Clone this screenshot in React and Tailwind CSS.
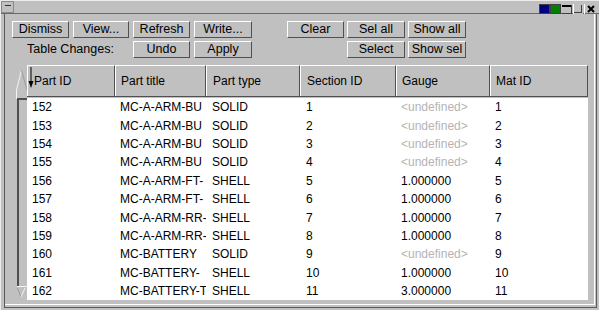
import React from "react";

const font = { fontFamily: '"Liberation Sans", Arial, sans-serif' };

const columns = [
  { key: "id", label: "Part ID", width: "w-[88px]", pad: "pl-[5px]" },
  { key: "title", label: "Part title", width: "w-[91px]", pad: "pl-[5px]" },
  { key: "type", label: "Part type", width: "w-[94px]", pad: "pl-[6px]" },
  { key: "section", label: "Section ID", width: "w-[96px]", pad: "pl-[6px]" },
  { key: "gauge", label: "Gauge", width: "w-[94px]", pad: "pl-[5px]" },
  { key: "mat", label: "Mat ID", width: "w-[98px]", pad: "pl-[5px]" },
];

const parts = [
  { id: 152, title: "MC-A-ARM-BU", type: "SOLID", section: 1, gauge: null, mat: 1 },
  { id: 153, title: "MC-A-ARM-BU", type: "SOLID", section: 2, gauge: null, mat: 2 },
  { id: 154, title: "MC-A-ARM-BU", type: "SOLID", section: 3, gauge: null, mat: 3 },
  { id: 155, title: "MC-A-ARM-BU", type: "SOLID", section: 4, gauge: null, mat: 4 },
  { id: 156, title: "MC-A-ARM-FT-", type: "SHELL", section: 5, gauge: "1.000000", mat: 5 },
  { id: 157, title: "MC-A-ARM-FT-", type: "SHELL", section: 6, gauge: "1.000000", mat: 6 },
  { id: 158, title: "MC-A-ARM-RR-", type: "SHELL", section: 7, gauge: "1.000000", mat: 7 },
  { id: 159, title: "MC-A-ARM-RR-", type: "SHELL", section: 8, gauge: "1.000000", mat: 8 },
  { id: 160, title: "MC-BATTERY", type: "SOLID", section: 9, gauge: null, mat: 9 },
  { id: 161, title: "MC-BATTERY-", type: "SHELL", section: 10, gauge: "1.000000", mat: 10 },
  { id: 162, title: "MC-BATTERY-T", type: "SHELL", section: 11, gauge: "3.000000", mat: 11 },
];

const Button = ({ children, className = "" }) => (
  <button
    className={`h-[17px] flex items-center justify-center bg-[#c0c0c0] border-t border-l border-white border-b border-r border-b-[#505050] border-r-[#505050] text-[12.5px] leading-none text-black ${className}`}
  >
    {children}
  </button>
);

const TitleBar = () => (
  <div className="h-[13px] flex items-start border-b border-[#6a6a6a] shrink-0">
    <div className="w-[13px] h-[12px] border border-[#8a8a8a] relative">
      <div className="absolute left-[3px] top-[3px] w-[6px] h-px bg-[#303030]" />
    </div>
    <div className="flex-1" />
    <div className="flex items-start mt-[3px]">
      <div className="w-[11px] h-[10px] bg-[#000080] border border-[#404040]" />
      <div className="w-[11px] h-[10px] bg-[#008000] border border-[#404040]" />
      <svg width="11" height="10" className="ml-px">
        <rect x="0" y="0" width="10" height="10" fill="#c0c0c0" />
        <rect x="0" y="1" width="9" height="2" fill="#000" />
        <line x1="9.5" y1="1" x2="9.5" y2="10" stroke="#404040" />
        <line x1="0" y1="9.5" x2="10" y2="9.5" stroke="#404040" />
      </svg>
      <svg width="10" height="10">
        <rect x="0" y="0" width="10" height="10" fill="#c0c0c0" />
        <line x1="0.5" y1="0" x2="0.5" y2="10" stroke="#ffffff" />
        <line x1="8.5" y1="1" x2="8.5" y2="9" stroke="#404040" />
        <line x1="1" y1="8.5" x2="9" y2="8.5" stroke="#404040" />
      </svg>
      <div className="w-px h-[10px] bg-white ml-[1px]" />
      <svg width="11" height="10" className="ml-[1px] mr-[2px]">
        <path d="M2 2 L8 8 M8 2 L2 8" stroke="#000" strokeWidth="2" />
      </svg>
    </div>
  </div>
);

const Scrollbar = () => (
  <svg width="11" height="235" className="shrink-0">
    <line x1="0.5" y1="25" x2="5.5" y2="5" stroke="#f4f4f4" />
    <line x1="5.5" y1="5" x2="11" y2="25" stroke="#9a9a9a" />
    <line x1="0.5" y1="25" x2="0.5" y2="34" stroke="#f4f4f4" />
    <rect x="1" y="33" width="10" height="2" fill="#505050" />
    <rect x="1" y="33" width="2" height="188" fill="#505050" />
    <line x1="1" y1="221.5" x2="11" y2="221.5" stroke="#f4f4f4" />
    <line x1="1.5" y1="223" x2="5" y2="232" stroke="#9a9a9a" />
    <line x1="5" y1="232" x2="9" y2="223" stroke="#f4f4f4" />
  </svg>
);

const SortArrow = () => (
  <svg width="6" height="22" className="shrink-0 self-start mt-[1px] ml-[0px]">
    <line x1="3" y1="0" x2="3" y2="17" stroke="#000" strokeWidth="1" />
    <path d="M0.5 14 L5.5 14 L3 21 Z" fill="#000" />
  </svg>
);

const PartsTable = () => (
  <div className="w-[561px] flex flex-col">
    <div className="h-[32px] flex border-b border-[#505050]">
      {columns.map((col) => (
        <div
          key={col.key}
          className={`${col.width} flex items-center border-t border-l border-white border-r border-r-[#505050] text-[12px] text-black`}
        >
          {col.key === "id" ? (
            <>
              <SortArrow />
              <span>{col.label}</span>
            </>
          ) : (
            <span className={col.pad}>{col.label}</span>
          )}
        </div>
      ))}
    </div>
    <div className="mt-[1px] bg-white h-[202px] overflow-hidden">
      {parts.map((p) => (
        <div key={p.id} className="h-[18.4px] flex items-center text-[12px] text-black">
          {columns.map((col) => (
            <div
              key={col.key}
              className={`${col.width} ${col.pad} whitespace-nowrap overflow-hidden`}
            >
              {col.key === "gauge" && p.gauge === null ? (
                <span className="text-[#b4b4b4]">&lt;undefined&gt;</span>
              ) : (
                p[col.key]
              )}
            </div>
          ))}
        </div>
      ))}
    </div>
  </div>
);

export default function App() {
  return (
    <div
      className="w-[599px] h-[310px] bg-[#c0c0c0] flex flex-col overflow-hidden border-t border-l border-[#ececec]"
      style={font}
    >
      <TitleBar />
      <div className="flex-1 ml-[3px] mr-[2px] mb-[2px] border-l border-r border-b border-[#5a5a5a] flex">
        <div className="flex-1 mr-[1px] mb-[2px] border-r border-b border-white flex flex-col">
          <div className="pt-[7px] pl-[7px] flex">
            <Button className="w-[57px]">Dismiss</Button>
            <Button className="w-[56px] ml-[4px]">View...</Button>
            <Button className="w-[57px] ml-[4px]">Refresh</Button>
            <Button className="w-[58px] ml-[4px]">Write...</Button>
            <Button className="w-[57px] ml-[35px]">Clear</Button>
            <Button className="w-[58px] ml-[3px]">Sel all</Button>
            <Button className="w-[58px] ml-[3px]">Show all</Button>
          </div>
          <div className="mt-[3px] pl-[7px] flex">
            <div className="w-[121px] h-[17px] flex items-center pl-[15px] text-[12.5px] text-black">
              Table Changes:
            </div>
            <Button className="w-[57px]">Undo</Button>
            <Button className="w-[58px] ml-[4px]">Apply</Button>
            <Button className="w-[58px] ml-[95px]">Select</Button>
            <Button className="w-[58px] ml-[3px]">Show sel</Button>
          </div>
          <div className="mt-[7px] pl-[11px] flex">
            <Scrollbar />
            <PartsTable />
          </div>
        </div>
      </div>
    </div>
  );
}
